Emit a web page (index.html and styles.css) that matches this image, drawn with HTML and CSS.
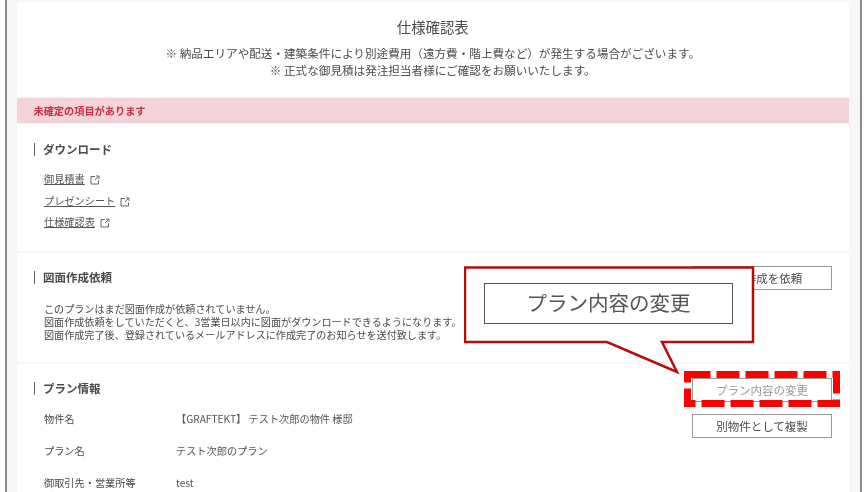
FILE: index.html
```html
<!DOCTYPE html>
<html lang="ja">
<head>
<meta charset="utf-8">
<title>仕様確認表</title>
<link rel="stylesheet" href="styles.css">
</head>
<body>
<div class="frame">
  <section class="card head">
    <h1 class="title">仕様確認表</h1>
    <p class="note">※ 納品エリアや配送・建築条件により別途費用（遠方費・階上費など）が発生する場合がございます。</p>
    <p class="note">※ 正式な御見積は発注担当者様にご確認をお願いいたします。</p>
  </section>
  <div class="alert">未確定の項目があります</div>
  <section class="card download">
    <h2 class="heading">ダウンロード</h2>
    <ul class="links">
      <li><a class="link">御見積書</a><svg class="ext" viewBox="0 0 10 10"><path d="M5 1.5H1v7.5h7.5V5.5M5 5l3.5-3.5M6 1h3v3" /></svg></li>
      <li><a class="link">プレゼンシート</a><svg class="ext" viewBox="0 0 10 10"><path d="M5 1.5H1v7.5h7.5V5.5M5 5l3.5-3.5M6 1h3v3" /></svg></li>
      <li><a class="link">仕様確認表</a><svg class="ext" viewBox="0 0 10 10"><path d="M5 1.5H1v7.5h7.5V5.5M5 5l3.5-3.5M6 1h3v3" /></svg></li>
    </ul>
  </section>
  <section class="card request">
    <div class="row">
      <h2 class="heading">図面作成依頼</h2>
      <button class="btn">図面作成を依頼</button>
    </div>
    <p class="body">このプランはまだ図面作成が依頼されていません。<br>図面作成依頼をしていただくと、3営業日以内に図面がダウンロードできるようになります。<br>図面作成完了後、登録されているメールアドレスに作成完了のお知らせを送付致します。</p>
  </section>
  <section class="card plan">
    <div class="plan-info">
      <h2 class="heading">プラン情報</h2>
      <dl class="info">
        <dt>物件名</dt><dd>【GRAFTEKT】 テスト次郎の物件 様邸</dd>
        <dt>プラン名</dt><dd>テスト次郎のプラン</dd>
        <dt>御取引先・営業所等</dt><dd>test</dd>
      </dl>
    </div>
    <div class="actions">
      <button class="btn muted">プラン内容の変更</button>
      <button class="btn">別物件として複製</button>
    </div>
  </section>
</div>

<svg class="dash" viewBox="0 0 156 36"><rect x="3.5" y="3.5" width="149" height="29" /></svg>
<div class="callout">
  <svg class="callout-shape" viewBox="0 0 300 120"><path d="M1 1.5H289V76H198L213 106L143 76H1Z" /></svg>
  <div class="callout-label">プラン内容の変更</div>
</div>
</body>
</html>
```
FILE: styles.css
```css
* { box-sizing: border-box; }
html, body { margin: 0; height: 492px; overflow: hidden; background: #fff; }
body { font-family: "Noto Sans CJK JP", "Liberation Sans", sans-serif; color: #4a4a4a; position: relative; filter: blur(0.35px); }
.frame {
  margin-left: 5px; width: 857px; height: 492px;
  border-left: 2px solid #8a8a8a; border-right: 2px solid #8a8a8a;
  background: #f7f7f7; padding: 2px 11px 0 9.5px;
  display: flex; flex-direction: column;
}
.card { background: #fff; }
.head { height: 95px; padding-top: 15px; text-align: center; margin-bottom: 1px; }
.title { margin: 0 0 8px; font-size: 14.4px; font-weight: 400; line-height: 20px; }
.note { margin: 0; font-size: 11.6px; line-height: 17px; }
.alert {
  height: 25px; background: #f3d3d8; color: #c5304a;
  font-size: 10.2px; font-weight: 700; line-height: 25px; padding-left: 17px;
}
.download { height: 127px; padding: 19px 17.5px 0; margin-bottom: 2px; margin-top: 1px; }
.heading {
  margin: 0; font-size: 11.5px; font-weight: 700; line-height: 13px;
  border-left: 1.5px solid #666; padding-left: 8px; color: #4a4a4a;
}
.links { list-style: none; margin: 15px 0 0 10px; padding: 0; font-size: 10.2px; }
.links li { height: 21.5px; display: flex; align-items: flex-start; gap: 5px; }
.link { text-decoration: underline; line-height: 15px; color: #555; }
.ext { width: 10px; height: 10px; margin-top: 4px; fill: none; stroke: #666; stroke-width: 1; }
.request { height: 109px; padding: 13px 17px 0 17.5px; margin-bottom: 2px; }
.row { display: flex; justify-content: space-between; align-items: flex-start; }
.row .heading { margin-top: 5px; }
.btn {
  width: 140px; height: 24px; padding: 0; background: #fff; border: 1px solid #999;
  font: 400 11.5px/22px "Noto Sans CJK JP", sans-serif; color: #4a4a4a;
}
.muted { color: #999; }
.body { margin: 12px 0 0 10px; font-size: 10.1px; line-height: 13px; color: #4a4a4a; }
.plan { flex: 1; padding: 14px 17px 0 17.5px; display: flex; justify-content: space-between; }
.plan-info { padding-top: 4px; }
.info {
  margin: 17px 0 0 10px; display: grid; grid-template-columns: 132px 1fr;
  row-gap: 18px; font-size: 10.2px; line-height: 14px;
}
.info dt, .info dd { margin: 0; }
.info dd { color: #555; }
.actions { display: flex; flex-direction: column; gap: 12px; }
.dash {
  position: absolute; left: 684px; top: 371px; width: 156px; height: 36px;
  fill: none; stroke: #f00; stroke-width: 7; stroke-dasharray: 23 6;
}
.callout { position: absolute; left: 464px; top: 266px; width: 300px; height: 120px; }
.callout-shape { position: absolute; inset: 0; width: 100%; height: 100%; fill: #fff; stroke: #b80c0c; stroke-width: 2.5; }
.callout-label {
  position: absolute; left: 20px; top: 17px; width: 249px; height: 41px;
  border: 1px solid #555; background: #fff; color: #555;
  font-size: 20.5px; line-height: 37px; text-align: center;
}
```
